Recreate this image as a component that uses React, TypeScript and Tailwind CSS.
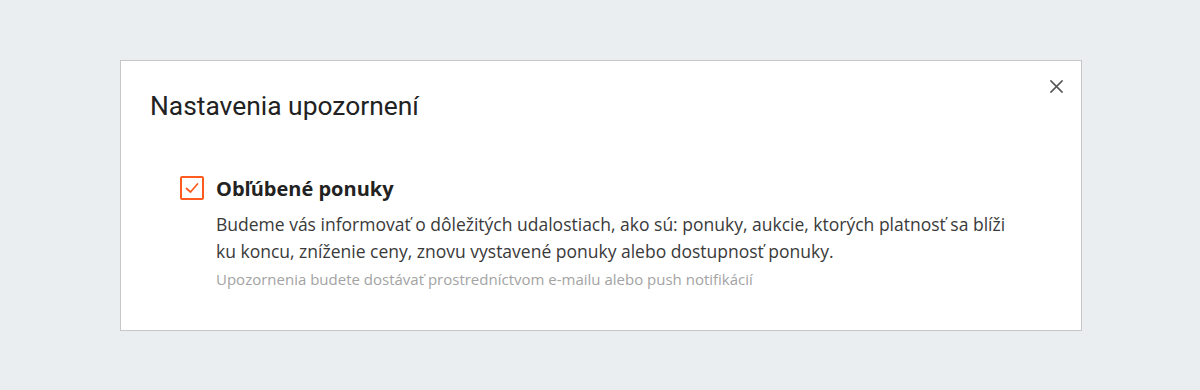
import React from "react";

export default function App() {
  return (
    <div className="w-[1200px] h-[390px] bg-[#ebeef1] pt-[60px] pl-[120px]">
      <div className="relative w-[962px] h-[271px] bg-white border border-[#c7c7c7] pt-[27px] px-[29px]">
        <button className="absolute right-[16px] top-[16px] w-[18px] h-[18px] flex items-center justify-center text-[#555]">
          <svg width="15" height="15" viewBox="0 0 16 16" fill="none" stroke="currentColor" strokeWidth="1.6" strokeLinecap="round">
            <path d="M2 2 L14 14 M14 2 L2 14" />
          </svg>
        </button>
        <h2 className="text-[26.4px] leading-[36px] text-[#222] font-['Roboto',sans-serif] font-normal">
          Nastavenia upozornení
        </h2>
        <div className="mt-[52px] pl-[30px] flex gap-[12px] font-['Open_Sans',sans-serif]">
          <div className="w-[24px] h-[24px] shrink-0 border-2 border-[#ff5b1f] rounded-[2px] flex items-center justify-center">
            <svg width="16" height="16" viewBox="0 0 16 16" fill="none" stroke="#ff5b1f" strokeWidth="1.8" strokeLinecap="round" strokeLinejoin="round">
              <path d="M2.5 8.5 L6.5 12 L13.5 4" />
            </svg>
          </div>
          <div className="w-[805px]">
            <div className="text-[20px] leading-[25px] font-bold text-[#222]">Obľúbené ponuky</div>
            <p className="mt-[10px] text-[17.5px] leading-[27px] text-[#3a3a3a]">
              Budeme vás informovať o dôležitých udalostiach, ako sú: ponuky, aukcie, ktorých platnosť sa blíži ku koncu, zníženie ceny, znovu vystavené ponuky alebo dostupnosť ponuky.
            </p>
            <p className="mt-[4px] text-[15px] leading-[20px] text-[#a3a3a3]">
              Upozornenia budete dostávať prostredníctvom e-mailu alebo push notifikácií
            </p>
          </div>
        </div>
      </div>
    </div>
  );
}
